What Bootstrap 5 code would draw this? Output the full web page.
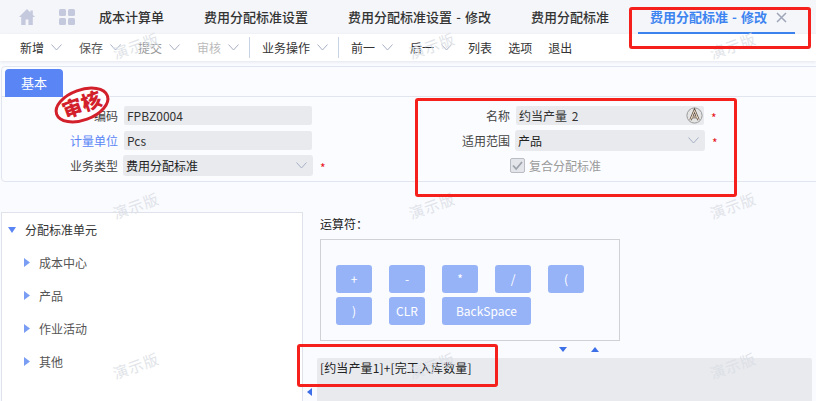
<!DOCTYPE html>
<html lang="zh-CN">
<head>
<meta charset="utf-8">
<title>费用分配标准 - 修改</title>
<link href="https://cdn.jsdelivr.net/npm/bootstrap@5.3.0/dist/css/bootstrap.min.css" rel="stylesheet">
<style>
html,body{height:401px;overflow:hidden}
body{background:#fafbff;font-family:"Noto Sans CJK SC","Liberation Sans",sans-serif;font-size:12px;color:#333;position:relative}
.tabbar{height:34px;background:#f5f6fa}
.home-ic{margin-left:19px;width:16px;height:16px;flex:none}
.grid-ic{margin-left:24px;margin-right:24px;width:16px;height:16px;flex:none}
.pg-tab{font-size:13px;font-weight:500;color:#333;margin-right:40px;white-space:nowrap;line-height:34px;word-spacing:1.2px}
.pg-active{color:#3d84f0;font-weight:700;margin:0 0 0 -11px;padding:0 8px 0 12px;height:34px;border-bottom:2px solid #3d84f0;line-height:33px}
.pg-x{margin-left:9px;width:11px;height:11px;vertical-align:-1px}
.toolbar{height:27px;background:#fff;box-shadow:0 1px 3px rgba(60,70,110,.12);padding-left:20px;position:relative}
.tl{white-space:nowrap;color:#333}
.tl-dim{color:#555}
.tl-dim2{color:#999}
.tl-faint{color:#bbb}
.chev{width:11px;height:7px;margin:0 17px 0 7px;flex:none}
.chev-s{margin-right:10px}
.chev-b{margin-right:16px}
.tl-sep{width:1px;height:21px;background:#c9d3e6;margin-right:12px}
.tl-plain{margin-right:16px}
.fcard{margin:5px -6px 0 1px;height:116px;border:1px solid #e1e5ef;border-radius:4px;background:#fbfcff;position:relative}
.tabstrip{height:30px;border-bottom:1px solid #e1e5ef;padding:2px 0 0 3px}
.base-tab{width:58px;height:28px;background:#5a86f5;color:#fff;border-radius:4px 4px 0 0;text-align:center;line-height:28px;font-size:13px}
.frm{display:grid;grid-template-columns:414px 1fr;grid-auto-rows:25px;padding-top:6px}
.lbl{width:116px;text-align:right;margin-right:6px;color:#444;flex:none}
.lbl-link{color:#5a86f5}
.lbl-r{width:94px}
.finput.form-control{width:188px;height:19px;min-height:0;padding:0 3px;border:0;border-radius:2px;background:#e8eaee;font-size:12px;color:#333;box-shadow:none;word-spacing:2px}
.fsel.form-select{width:190px;height:21px;margin-left:-1px;padding:0 3px;border:0;border-radius:3px;background-color:#e8eaee;font-size:12px;color:#222;background-size:11px 7px;background-position:right 6px center;background-image:url("data:image/svg+xml,%3Csvg xmlns='http://www.w3.org/2000/svg' viewBox='0 0 11 7'%3E%3Cpath d='M.5 .5l5 5.5 5-5.5' fill='none' stroke='%23a8b0c6'/%3E%3C/svg%3E");opacity:1}
.star{color:#e8141a;font-size:12px;margin-left:7px;line-height:1;position:relative;top:2px}
.a-ic{position:absolute;right:1px;top:1px;width:17px;height:17px}
.inp-wrap{width:188px;height:19px}
.chk{width:15px;height:15px;background:#e3e5ea;border:1px solid #b9bcc4;border-radius:2px;margin-left:94px;flex:none}
.chk-t{color:#9a9a9a;margin-left:4px}
.bottom{margin-top:30px}
.tree{width:302px;height:189px;margin-left:1px;background:#fff;border:1px solid #dfe2ea;border-bottom:0;flex:none}
.tr-row{height:33px;padding-left:6px}
.tr-child{padding-left:22px;color:#555}
.tri{margin-right:9px;flex:none}
.tr-root{color:#333}
.rightp{padding-left:14px;margin-right:4px;position:relative}
.op-title{height:24px;line-height:24px;padding-left:3px;color:#222;margin-bottom:3px}
.op-box{width:300px;height:102px;margin-left:3px;border:1px solid #cfd1d6;padding:25px 0 0 15px}
.op-grid{display:grid;grid-template-columns:repeat(5,36px);grid-auto-rows:28px;column-gap:17px;row-gap:4px}
.op-btn.btn{background:#97b3f7;border:0;border-radius:3px;padding:0;color:#fff;font-size:12px;line-height:28px;--bs-btn-hover-bg:#97b3f7;--bs-btn-hover-color:#fff}
.op-wide{grid-column:span 2}
.ar-row{height:17px;padding-left:242px;gap:24px}
.formula{background:#e8eaee;height:43px;padding:0 3px;line-height:20px;color:#222;border-radius:2px 2px 0 0;letter-spacing:.13px}
.left-ar{position:absolute;left:4px;top:176px}
.wm{position:absolute;color:#dcdfe6;font-size:15px;transform:translate(-50%,-50%) rotate(-20deg);white-space:nowrap;letter-spacing:1px;pointer-events:none;opacity:.85;z-index:5}
.wx1{left:136px}.wx2{left:432px}.wx3{left:733px}
.wy1{top:46px}.wy2{top:206px}.wy3{top:366px}
.stamp{position:absolute;left:50px;top:16px;width:60px;height:44px;overflow:visible;z-index:3}
.redbox{position:absolute;border:3px solid #f5201b;border-radius:3px;pointer-events:none;z-index:6}
.rb1{left:629px;top:7px;width:182px;height:42px}
.rb2{left:415px;top:98px;width:322px;height:99px}
.rb3{left:297px;top:344px;width:201px;height:43px}
</style>
</head>
<body>
<div class="tabbar d-flex align-items-center">
  <svg class="home-ic" viewBox="0 0 16 16"><path d="M8 0 0 8h2.2v8h4.4v-5.4h2.8V16h4.4V8H16l-2.2-2.2V1.5h-2.4v1.9z" fill="#c5c9dd"/></svg>
  <svg class="grid-ic" viewBox="0 0 16 16"><g fill="#c5c9dd"><rect width="7" height="7" rx="1.5"/><rect x="9" width="7" height="7" rx="1.5"/><rect y="9" width="7" height="7" rx="1.5"/><rect x="9" y="9" width="7" height="7" rx="1.5"/></g></svg>
  <span class="pg-tab">成本计算单</span>
  <span class="pg-tab">费用分配标准设置</span>
  <span class="pg-tab">费用分配标准设置 - 修改</span>
  <span class="pg-tab">费用分配标准</span>
  <span class="pg-tab pg-active">费用分配标准 - 修改<svg class="pg-x" viewBox="0 0 11 11"><path d="M1 1l9 9M10 1l-9 9" stroke="#9fa6b8" stroke-width="1.5" fill="none"/></svg></span>
</div>
<div class="toolbar d-flex align-items-center">
  <span class="tl">新增</span><svg class="chev" viewBox="0 0 11 7"><path d="M.5 .5l5 5.5 5-5.5" fill="none" stroke="#a8b0c6"/></svg>
  <span class="tl tl-dim">保存</span><svg class="chev" viewBox="0 0 11 7"><path d="M.5 .5l5 5.5 5-5.5" fill="none" stroke="#a8b0c6"/></svg>
  <span class="tl tl-dim2">提交</span><svg class="chev" viewBox="0 0 11 7"><path d="M.5 .5l5 5.5 5-5.5" fill="none" stroke="#a8b0c6"/></svg>
  <span class="tl tl-faint">审核</span><svg class="chev chev-s" viewBox="0 0 11 7"><path d="M.5 .5l5 5.5 5-5.5" fill="none" stroke="#a8b0c6"/></svg>
  <span class="tl-sep"></span>
  <span class="tl">业务操作</span><svg class="chev chev-s" viewBox="0 0 11 7"><path d="M.5 .5l5 5.5 5-5.5" fill="none" stroke="#a8b0c6"/></svg>
  <span class="tl-sep"></span>
  <span class="tl">前一</span><svg class="chev" viewBox="0 0 11 7"><path d="M.5 .5l5 5.5 5-5.5" fill="none" stroke="#a8b0c6"/></svg>
  <span class="tl">后一</span><svg class="chev chev-b" viewBox="0 0 11 7"><path d="M.5 .5l5 5.5 5-5.5" fill="none" stroke="#a8b0c6"/></svg>
  <span class="tl tl-plain">列表</span><span class="tl tl-plain">选项</span><span class="tl">退出</span>
</div>
<div class="fcard">
  <div class="tabstrip"><div class="base-tab">基本</div></div>
  <svg class="stamp" viewBox="0 0 60 44"><g transform="rotate(-20 30 22)"><ellipse cx="30" cy="22" rx="27" ry="15" fill="#fff" stroke="#d3212c" stroke-width="3"/><text x="30" y="29" text-anchor="middle" font-size="20" font-weight="900" fill="#d3212c" font-family="Noto Sans CJK SC">审核</text></g></svg>
  <div class="frm">
    <div class="d-flex align-items-center"><span class="lbl">编码</span><input class="form-control finput" value="FPBZ0004" readonly></div>
    <div class="d-flex align-items-center"><span class="lbl lbl-r">名称</span><div class="inp-wrap position-relative"><input class="form-control finput" value="约当产量 2" readonly><svg class="a-ic" viewBox="0 0 17 17"><circle cx="8.5" cy="8.5" r="7.6" fill="#e4e4e4" stroke="#9a9a9a"/><path d="M4.5 13 8.5 3.5 12.5 13M6 10h5" fill="none" stroke="#5a4a40" stroke-width="2.4"/><path d="M4.5 13 8.5 3.5 12.5 13M6 10h5" fill="none" stroke="#f7e6d0" stroke-width="1"/></svg></div><span class="star">*</span></div>
    <div class="d-flex align-items-center"><span class="lbl lbl-link">计量单位</span><input class="form-control finput" value="Pcs" readonly></div>
    <div class="d-flex align-items-center"><span class="lbl lbl-r">适用范围</span><select class="form-select fsel"><option>产品</option></select><span class="star">*</span></div>
    <div class="d-flex align-items-center"><span class="lbl">业务类型</span><select class="form-select fsel"><option>费用分配标准</option></select><span class="star">*</span></div>
    <div class="d-flex align-items-center"><span class="chk d-flex align-items-center justify-content-center"><svg width="13" height="13" viewBox="0 0 13 13"><path d="M2 6.5 5.2 10 11 3" fill="none" stroke="#9ea2aa" stroke-width="1.8"/></svg></span><span class="chk-t">复合分配标准</span></div>
  </div>
</div>
<div class="bottom d-flex">
  <div class="tree">
    <div class="tr-row tr-root d-flex align-items-center"><svg class="tri" width="8" height="6" viewBox="0 0 8 6"><path d="M0 0h8L4 6z" fill="#5a86f5"/></svg>分配标准单元</div>
    <div class="tr-row tr-child d-flex align-items-center"><svg class="tri" width="6" height="9" viewBox="0 0 6 9"><path d="M0 0l6 4.5L0 9z" fill="#7b9ef5"/></svg>成本中心</div>
    <div class="tr-row tr-child d-flex align-items-center"><svg class="tri" width="6" height="9" viewBox="0 0 6 9"><path d="M0 0l6 4.5L0 9z" fill="#7b9ef5"/></svg>产品</div>
    <div class="tr-row tr-child d-flex align-items-center"><svg class="tri" width="6" height="9" viewBox="0 0 6 9"><path d="M0 0l6 4.5L0 9z" fill="#7b9ef5"/></svg>作业活动</div>
    <div class="tr-row tr-child d-flex align-items-center"><svg class="tri" width="6" height="9" viewBox="0 0 6 9"><path d="M0 0l6 4.5L0 9z" fill="#7b9ef5"/></svg>其他</div>
  </div>
  <div class="rightp flex-grow-1">
    <div class="op-title">运算符：</div>
    <div class="op-box">
      <div class="op-grid">
        <button class="btn op-btn">+</button><button class="btn op-btn">-</button><button class="btn op-btn">*</button><button class="btn op-btn">/</button><button class="btn op-btn">(</button>
        <button class="btn op-btn">)</button><button class="btn op-btn">CLR</button><button class="btn op-btn op-wide">BackSpace</button>
      </div>
    </div>
    <div class="ar-row d-flex align-items-center">
      <svg width="8" height="5" viewBox="0 0 8 5"><path d="M0 0h8L4 5z" fill="#3d6fe8"/></svg>
      <svg width="8" height="5" viewBox="0 0 8 5"><path d="M0 5h8L4 0z" fill="#3d6fe8"/></svg>
    </div>
    <div class="formula">[约当产量1]+[完工入库数量]</div>
    <svg class="left-ar" width="5" height="8" viewBox="0 0 5 8"><path d="M5 0v8L0 4z" fill="#3d6fe8"/></svg>
  </div>
</div>
<span class="wm wx1 wy1">演示版</span>
<span class="wm wx2 wy1">演示版</span>
<span class="wm wx3 wy1">演示版</span>
<span class="wm wx1 wy2">演示版</span>
<span class="wm wx2 wy2">演示版</span>
<span class="wm wx3 wy2">演示版</span>
<span class="wm wx1 wy3">演示版</span>
<span class="wm wx2 wy3">演示版</span>
<span class="wm wx3 wy3">演示版</span>
<div class="redbox rb1"></div>
<div class="redbox rb2"></div>
<div class="redbox rb3"></div>
<script src="https://cdn.jsdelivr.net/npm/bootstrap@5.3.0/dist/js/bootstrap.bundle.min.js"></script>
</body>
</html>
